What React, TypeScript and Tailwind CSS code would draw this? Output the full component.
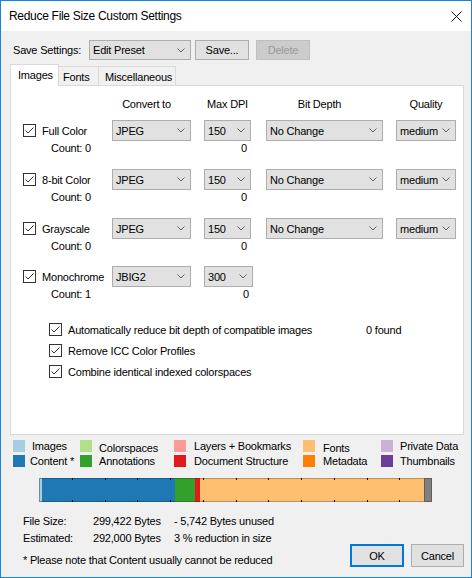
import type { ReactNode } from 'react';

const Chevron = () => (
    <svg width="8" height="5" viewBox="0 0 8 5" className="shrink-0">
        <path d="M0.5 0.5 L4 4 L7.5 0.5" fill="none" stroke="#606060" strokeWidth="1" />
    </svg>
);

const Combo = ({ value, className }: { value: string; className: string }) => (
    <div className={`h-[21px] flex items-center justify-between bg-[#e1e1e1] border border-[#adadad] pl-[3px] pr-[5px] ${className}`}>
        <span>{value}</span>
        <Chevron />
    </div>
);

const Check = () => (
    <div className="w-[13px] h-[13px] shrink-0 bg-white border border-[#333333] flex items-center justify-center">
        <svg width="11" height="11" viewBox="0 0 11 11">
            <path d="M1.5 5.5 L4 8 L9.5 2.5" fill="none" stroke="#333333" strokeWidth="1" />
        </svg>
    </div>
);

const Button = ({ children, className }: { children: ReactNode; className: string }) => (
    <div className={`flex items-center justify-center ${className}`}>{children}</div>
);

type ImageRow = { label: string; convert: string; dpi: string; depth?: string; quality?: string; count: number; gap: string };

const rows: ImageRow[] = [
    { label: 'Full Color', convert: 'JPEG', dpi: '150', depth: 'No Change', quality: 'medium', count: 0, gap: 'mt-[8px]' },
    { label: '8-bit Color', convert: 'JPEG', dpi: '150', depth: 'No Change', quality: 'medium', count: 0, gap: 'mt-[14px]' },
    { label: 'Grayscale', convert: 'JPEG', dpi: '150', depth: 'No Change', quality: 'medium', count: 0, gap: 'mt-[14px]' },
    { label: 'Monochrome', convert: 'JBIG2', dpi: '300', count: 1, gap: 'mt-[13px]' },
];

const legend = [
    [
        { color: 'bg-[#a6cee3]', label: 'Images', cls: 'ml-[7px]' },
        { color: 'bg-[#1f78b4]', label: 'Content *', cls: 'ml-[5px]' },
    ],
    [
        { color: 'bg-[#b2df8a]', label: 'Colorspaces', cls: 'ml-[7px] pt-[4px]' },
        { color: 'bg-[#33a02c]', label: 'Annotations', cls: 'ml-[7px]' },
    ],
    [
        { color: 'bg-[#fb9a99]', label: 'Layers + Bookmarks', cls: 'ml-[8px]' },
        { color: 'bg-[#e31a1c]', label: 'Document Structure', cls: 'ml-[8px]' },
    ],
    [
        { color: 'bg-[#fdbf6f]', label: 'Fonts', cls: 'ml-[8px] pt-[4px]' },
        { color: 'bg-[#ff7f00]', label: 'Metadata', cls: 'ml-[8px]' },
    ],
    [
        { color: 'bg-[#cab2d6]', label: 'Private Data', cls: 'ml-[7px]' },
        { color: 'bg-[#6a3d9a]', label: 'Thumbnails', cls: 'ml-[7px]' },
    ],
];
const legendWidths = ['w-[67px]', 'w-[94px]', 'w-[129px]', 'w-[78px]', 'w-[80px]'];

// size bar segments, widths in px (bar is 393px wide)
const segments = [
    { cls: 'w-[3px] bg-[#a6cee3] border-y border-l border-[#6f8c9a]' },
    { cls: 'w-[133px] bg-[#1f78b4] border-y border-[#185f8e]' },
    { cls: 'w-[20px] bg-[#33a02c] border-y border-[#287e23]' },
    { cls: 'w-[5px] bg-[#e31a1c] border-y border-[#b31416]' },
    { cls: 'w-[224px] bg-[#fdbf6f] border-y border-[#b8925f]' },
    { cls: 'w-[8px] bg-[#808080] border border-[#5e5e5e]' },
];

export default function App() {
    return (
        <div className="w-[472px] h-[578px] border border-[#1883d7] bg-[#f0f0f0] flex flex-col text-[11px] leading-[14px] text-black tracking-[-0.2px] font-['Liberation_Sans',Arial,sans-serif] overflow-hidden">
            {/* title bar */}
            <div className="h-[30px] shrink-0 bg-white flex items-center justify-between pl-[8px] pr-[9px]">
                <span className="text-[12px] tracking-[-0.3px]">Reduce File Size Custom Settings</span>
                <svg width="11" height="11" viewBox="0 0 11 11">
                    <path d="M0.5 0.5 L10.5 10.5 M10.5 0.5 L0.5 10.5" stroke="#111" strokeWidth="1" />
                </svg>
            </div>

            {/* preset row */}
            <div className="mt-[9px] h-[20px] flex items-center pl-[12px]">
                <span className="w-[76px]">Save Settings:</span>
                <div className="w-[102px] h-[20px] flex items-center justify-between bg-[#e1e1e1] border border-[#adadad] pl-[3px] pr-[5px]">
                    <span>Edit Preset</span>
                    <Chevron />
                </div>
                <Button className="ml-[4px] w-[54px] h-[20px] bg-[#e1e1e1] border border-[#adadad]">Save...</Button>
                <Button className="ml-[7px] w-[54px] h-[20px] bg-[#cccccc] border border-[#bfbfbf] text-[#9a9a9a]">Delete</Button>
            </div>

            {/* tabs */}
            <div className="mt-[3px] ml-[9px] flex items-end h-[22px] relative z-10">
                <div className="w-[49px] h-[22px] -mb-px bg-white border-x border-t border-[#d9d9d9] pl-[7px] pt-[3px]">Images</div>
                <div className="w-[40px] h-[19px] border-r border-t border-[#d9d9d9] pl-[4px] pt-[3px]">Fonts</div>
                <div className="w-[77px] h-[19px] border-r border-t border-[#d9d9d9] pl-[6px] pt-[3px]">Miscellaneous</div>
            </div>

            {/* images tab page */}
            <div className="ml-[9px] w-[454px] h-[350px] shrink-0 bg-white border border-[#d9d9d9]">
                <div className="mt-[10px] h-[16px] flex items-center">
                    <div className="w-[101px]" />
                    <div className="w-[79px] text-center pr-[10px]">Convert to</div>
                    <div className="w-[47px] ml-[13px] text-center">Max DPI</div>
                    <div className="w-[117px] ml-[15px] text-center pr-[10px]">Bit Depth</div>
                    <div className="w-[60px] ml-[13px] text-center">Quality</div>
                </div>

                {rows.map((r) => (
                    <div key={r.label} className={r.gap}>
                        <div className="h-[21px] flex items-center">
                            <div className="w-[101px] flex items-center pl-[12px]">
                                <Check />
                                <span className="ml-[6px]">{r.label}</span>
                            </div>
                            <Combo value={r.convert} className="w-[79px]" />
                            <Combo value={r.dpi} className={r.depth ? 'w-[47px] ml-[13px]' : 'w-[49px] ml-[13px]'} />
                            {r.depth && <Combo value={r.depth} className="w-[117px] ml-[15px]" />}
                            {r.quality && <Combo value={r.quality} className="w-[60px] ml-[13px]" />}
                        </div>
                        <div className="h-[14px] flex">
                            <div className="w-[101px] pl-[40px]">Count: {r.count}</div>
                            <div className="w-[79px]" />
                            <div className={`${r.depth ? 'w-[47px]' : 'w-[49px]'} ml-[13px] text-right pr-[4px]`}>0</div>
                        </div>
                    </div>
                ))}

                <div className="mt-[18px] pl-[38px]">
                    <div className="h-[21px] flex items-center">
                        <Check />
                        <span className="ml-[6px] w-[298px]">Automatically reduce bit depth of compatible images</span>
                        <span>0 found</span>
                    </div>
                    <div className="h-[21px] flex items-center">
                        <Check />
                        <span className="ml-[6px]">Remove ICC Color Profiles</span>
                    </div>
                    <div className="h-[21px] flex items-center">
                        <Check />
                        <span className="ml-[6px]">Combine identical indexed colorspaces</span>
                    </div>
                </div>
            </div>

            {/* legend */}
            <div className="mt-[3px] pl-[12px] flex">
                {legend.map((col, i) => (
                    <div key={i} className={legendWidths[i]}>
                        {col.map((item) => (
                            <div key={item.label} className="h-[15px] flex items-center">
                                <div className={`w-[12px] h-[12px] shrink-0 ${item.color}`} />
                                <span className={`${item.cls} whitespace-nowrap`}>{item.label}</span>
                            </div>
                        ))}
                    </div>
                ))}
            </div>

            {/* size bar */}
            <div className="mt-[10px] ml-[38px] w-[393px] h-[24px] flex relative">
                {segments.map((s, i) => (
                    <div key={i} className={`h-full ${s.cls}`} />
                ))}
                {Array.from({ length: 11 }, (_, k) => (
                    <div key={k} className="absolute top-0 h-full w-px flex flex-col justify-between" style={{ left: Math.round((k + 1) * 32.75) }}>
                        <div className="h-[2px] bg-black" />
                        <div className="h-[2px] bg-black" />
                    </div>
                ))}
            </div>

            {/* summary + buttons */}
            <div className="flex-1 flex items-end justify-between pl-[22px] pr-[7px] pb-[9px]">
                <div>
                    <div className="h-[17px] flex items-center">
                        <span className="w-[70px]">File Size:</span>
                        <span className="w-[81px]">299,422 Bytes</span>
                        <span>- 5,742 Bytes unused</span>
                    </div>
                    <div className="h-[17px] flex items-center">
                        <span className="w-[70px]">Estimated:</span>
                        <span className="w-[81px]">292,000 Bytes</span>
                        <span>3 % reduction in size</span>
                    </div>
                    <div className="mt-[5px] h-[17px] flex items-center">* Please note that Content usually cannot be reduced</div>
                </div>
                <div className="flex gap-[7px] mb-px">
                    <Button className="w-[54px] h-[23px] bg-[#e1e1e1] border-2 border-[#0078d7]">OK</Button>
                    <Button className="w-[53px] h-[23px] bg-[#e1e1e1] border border-[#adadad]">Cancel</Button>
                </div>
            </div>
        </div>
    );
}
